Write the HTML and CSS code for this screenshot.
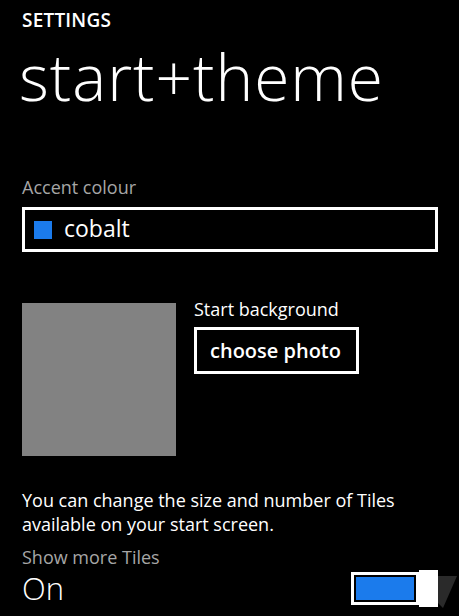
FILE: index.html
```html
<!DOCTYPE html>
<html lang="en">
<head>
    <meta charset="UTF-8">
    <meta name="viewport" content="width=device-width, initial-scale=1.0">
    <title>start+theme</title>
    <link rel="stylesheet" href="styles.css">
</head>
<body>
    <div class="page">
        <div class="app-title">SETTINGS</div>
        <h1 class="page-title">start+theme</h1>

        <div class="field-label accent-label">Accent colour</div>
        <div class="picker">
            <span class="swatch"></span>
            <span class="picker-text">cobalt</span>
        </div>

        <div class="bg-row">
            <div class="bg-preview"></div>
            <div class="bg-side">
                <div class="bg-label">Start background</div>
                <a href="#" class="button">choose photo</a>
            </div>
        </div>

        <p class="note">You can change the size and number of Tiles available on your start screen.</p>

        <div class="field-label toggle-label">Show more Tiles</div>
        <div class="toggle-row">
            <span class="toggle-state">On</span>
            <div class="switch">
                <div class="switch-track">
                    <div class="switch-fill"></div>
                </div>
                <div class="switch-thumb"></div>
                <svg class="watermark" width="20" height="36" viewBox="0 0 20 36">
                    <polygon points="0,4 20,4 6,36 0,30" fill="#2a2a2a"/>
                </svg>
            </div>
        </div>
    </div>
</body>
</html>
```

FILE: styles.css
```css
html, body {
    margin: 0;
    height: 100%;
    background: black;
}
body {
    color: white;
    font-family: "Open Sans", "DejaVu Sans", sans-serif;
    overflow: hidden;
}
.page {
    padding: 0 21px 0 22px;
}
.app-title {
    font-size: 19px;
    font-weight: 600;
    line-height: 20px;
    padding-top: 10px;
    letter-spacing: 0.2px;
}
.page-title {
    font-size: 64px;
    font-weight: 300;
    line-height: 70px;
    margin: 12px 0 0 -3px;
    letter-spacing: 1px;
}
.field-label {
    color: #a6a6a6;
    font-size: 18px;
    line-height: 24px;
}
.accent-label {
    margin-top: 63px;
}
.picker {
    display: flex;
    align-items: center;
    gap: 12px;
    height: 39px;
    border: 3px solid white;
    margin-top: 8px;
    padding: 0 9px;
}
.swatch {
    width: 18px;
    height: 18px;
    background: #1b7bec;
}
.picker-text {
    font-size: 23px;
    line-height: 30px;
    margin-top: -3px;
}
.bg-row {
    display: flex;
    gap: 18px;
    margin-top: 51px;
}
.bg-preview {
    width: 154px;
    height: 153px;
    background: #828282;
}
.bg-side {
    display: flex;
    flex-direction: column;
    align-items: flex-start;
}
.bg-label {
    font-size: 18px;
    line-height: 20px;
    margin-top: -4px;
}
.button {
    margin-top: 8px;
    border: 3px solid white;
    color: white;
    text-decoration: none;
    font-size: 20px;
    font-weight: 600;
    line-height: 26px;
    padding: 8px 15px 7px 13px;
}
.note {
    font-size: 18px;
    line-height: 24px;
    margin: 32px 0 0 0;
}
.toggle-label {
    margin-top: 9px;
}
.toggle-row {
    display: flex;
    justify-content: space-between;
    align-items: center;
    margin-top: -1px;
}
.toggle-state {
    font-size: 31px;
    font-weight: 300;
    line-height: 40px;
}
.switch {
    display: flex;
    align-items: center;
    position: relative;
    width: 87px;
    height: 37px;
}
.switch-track {
    width: 68px;
    height: 33px;
    border: 3px solid white;
    padding: 2px;
    box-sizing: border-box;
}
.switch-fill {
    width: 100%;
    height: 100%;
    background: #1b7bec;
}
.switch-thumb {
    position: absolute;
    right: 0;
    top: 0;
    width: 19px;
    height: 37px;
    background: white;
    z-index: 1;
}
.watermark {
    position: absolute;
    left: 86px;
    top: 2px;
}
```
